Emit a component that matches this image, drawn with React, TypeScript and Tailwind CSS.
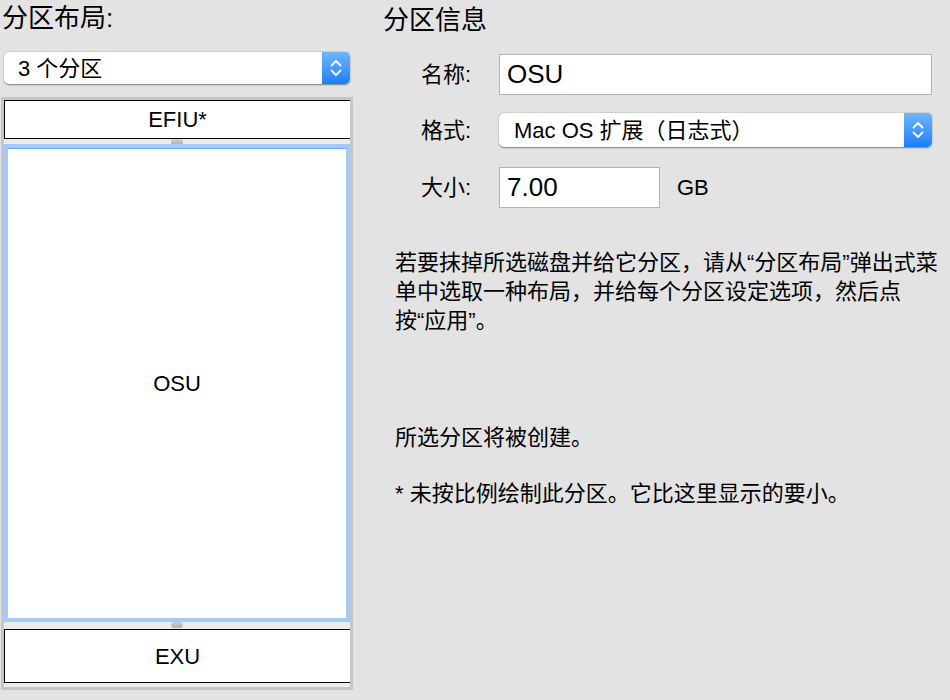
import React from 'react';

function Stepper() {
  return (
    <div className="flex h-full w-[28px] shrink-0 items-center justify-center rounded-r-[5px] bg-gradient-to-b from-[#6db4fb] to-[#1580fb]">
      <svg width="14" height="20" viewBox="0 0 14 20" fill="none">
        <path d="M2.5 7.5 L7 3 L11.5 7.5" stroke="white" strokeWidth="1.8" strokeLinecap="round" strokeLinejoin="round" />
        <path d="M2.5 12.5 L7 17 L11.5 12.5" stroke="white" strokeWidth="1.8" strokeLinecap="round" strokeLinejoin="round" />
      </svg>
    </div>
  );
}

function PopUp({ label, className, textClass }: { label: string; className: string; textClass: string }) {
  return (
    <div className={`flex items-stretch rounded-[5px] bg-white shadow-[0_0.5px_1.5px_rgba(0,0,0,0.45)] ${className}`}>
      <div className={`flex flex-1 items-center whitespace-nowrap text-[22px] text-black ${textClass}`}>{label}</div>
      <Stepper />
    </div>
  );
}

function Handle() {
  return <div className="h-[6px] w-[12px] shrink-0 rounded-[3px] bg-gradient-to-b from-[#cfcfcf] to-[#b0b0b0]" />;
}

export default function App() {
  return (
    <div className="flex h-[700px] w-[950px] overflow-hidden bg-[#e3e3e3] font-['Liberation_Sans','Noto_Sans_CJK_SC',sans-serif] text-black">
      {/* Partition layout */}
      <div className="flex w-[354px] shrink-0 flex-col">
        <div className="h-[36px] pl-[2px] text-[26px] leading-[36px]">分区布局:</div>
        <PopUp label="3 个分区" className="ml-[4px] mt-[16px] h-[32px] w-[346px]" textClass="pl-[14px]" />

        <div className="ml-[1px] mt-[13px] flex w-[352px] flex-col border-[3px] border-[#c6c6c6] bg-[#ececec] pb-[4px]">
          <div className="flex h-[39px] items-center justify-center border-y border-l border-black bg-white text-[22px]">
            EFIU*
          </div>
          <div className="flex h-[5px] items-start justify-center overflow-visible">
            <Handle />
          </div>
          <div className="flex h-[478px] items-center justify-center border-4 border-[#a3cbf8] bg-white text-[22px] shadow-[inset_0_1px_0_#6aa3e8]">
            OSU
          </div>
          <div className="flex h-[7px] items-start justify-center">
            <Handle />
          </div>
          <div className="flex h-[54px] items-center justify-center border-y border-l border-black bg-white text-[22px]">
            EXU
          </div>
        </div>
      </div>

      {/* Partition info */}
      <div className="ml-[29px] flex flex-1 flex-col">
        <div className="h-[40px] text-[26px] leading-[40px]">分区信息</div>

        <div className="mt-[14px] flex items-center">
          <div className="w-[88px] text-right text-[22px]">名称:</div>
          <div className="ml-[28px] flex h-[41px] w-[433px] items-center border border-[#b4b4b4] bg-white pl-[7px] text-[26px]">
            OSU
          </div>
        </div>

        <div className="mt-[18px] flex items-center">
          <div className="w-[88px] text-right text-[22px]">格式:</div>
          <PopUp label="Mac OS 扩展（日志式）" className="ml-[28px] h-[34px] w-[433px]" textClass="pl-[15px]" />
        </div>

        <div className="mt-[20px] flex items-center">
          <div className="w-[88px] text-right text-[22px]">大小:</div>
          <div className="ml-[28px] flex h-[41px] w-[161px] items-center border border-[#b4b4b4] bg-white pl-[7px] text-[26px]">
            7.00
          </div>
          <div className="ml-[17px] text-[22px]">GB</div>
        </div>

        <div className="ml-[12px] mt-[40px] whitespace-nowrap text-[22px] leading-[29px]">
          若要抹掉所选磁盘并给它分区，请从“分区布局”弹出式菜
          <br />
          单中选取一种布局，并给每个分区设定选项，然后点
          <br />
          按“应用”。
        </div>

        <div className="ml-[12px] mt-[88px] text-[22px] leading-[29px]">所选分区将被创建。</div>

        <div className="ml-[12px] mt-[27px] text-[22px] leading-[29px]">* 未按比例绘制此分区。它比这里显示的要小。</div>
      </div>
    </div>
  );
}
